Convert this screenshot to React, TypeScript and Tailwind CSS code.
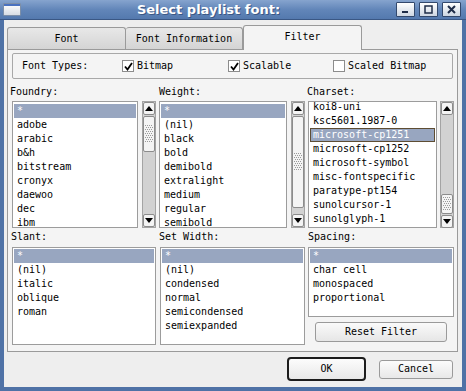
import React from "react";

const mono = "font-['DejaVu_Sans_Mono',monospace] text-[10px] leading-[14px] text-black";

const foundry = ["*", "adobe", "arabic", "b&h", "bitstream", "cronyx", "daewoo", "dec", "ibm"];
const weight = ["*", "(nil)", "black", "bold", "demibold", "extralight", "medium", "regular", "semibold"];
const charset = [
  "koi8-uni",
  "ksc5601.1987-0",
  "microsoft-cp1251",
  "microsoft-cp1252",
  "microsoft-symbol",
  "misc-fontspecific",
  "paratype-pt154",
  "sunolcursor-1",
  "sunolglyph-1",
];
const slant = ["*", "(nil)", "italic", "oblique", "roman"];
const setWidth = ["*", "(nil)", "condensed", "normal", "semicondensed", "semiexpanded"];
const spacing = ["*", "char cell", "monospaced", "proportional"];

function ListBox({
  items,
  selected,
  focus,
  inner,
  className,
}: {
  items: string[];
  selected: number;
  focus?: boolean;
  inner: string;
  className: string;
}) {
  return (
    <div className={"overflow-hidden border border-[#9c9c9c] bg-white " + className}>
      <div className={"flex flex-col px-[1px] " + inner}>
        {items.map((it, i) => (
          <div
            key={it}
            className={
              "h-[14px] shrink-0 whitespace-nowrap px-[3px] " +
              (i === selected
                ? "bg-[#98a6c0] text-white " + (focus ? "outline outline-1 -outline-offset-1 outline-[#5e4d33]" : "")
                : "")
            }
          >
            <span className={i === selected ? "text-white" : ""}>{it}</span>
          </div>
        ))}
      </div>
    </div>
  );
}

function Arrow({ up }: { up?: boolean }) {
  return (
    <div className="flex h-[13px] w-full shrink-0 items-center justify-center rounded-[2px] border border-[#8c8c8c] bg-[#f4f4f4]">
      <svg width="8" height="5" viewBox="0 0 8 5">
        {up ? <polygon points="0,5 8,5 4,0" fill="#000" /> : <polygon points="0,0 8,0 4,5" fill="#000" />}
      </svg>
    </div>
  );
}

function Grip({ h }: { h: number }) {
  const dots = [];
  for (let y = 0; y < h; y += 2) {
    for (let x = 0; x < 7; x += 2) {
      dots.push(<rect key={x + "-" + y} x={x + ((y / 2) % 2)} y={y} width="1" height="1" fill="#9a9a9a" />);
    }
  }
  return (
    <svg width="8" height={h} viewBox={"0 0 8 " + h}>
      {dots}
    </svg>
  );
}

function Scrollbar({ before, thumb }: { before: number; thumb: number }) {
  return (
    <div className="flex h-full w-[14px] shrink-0 flex-col border border-[#a4a4a4] bg-[#d2d2d2]">
      <Arrow up />
      <div className="flex flex-1 flex-col py-[1px]">
        <div style={{ height: before }} />
        <div
          className="flex shrink-0 items-center justify-center rounded-[2px] border border-[#8c8c8c] bg-[#f4f4f4]"
          style={{ height: thumb }}
        >
          <Grip h={Math.min(18, thumb - 6)} />
        </div>
      </div>
      <Arrow />
    </div>
  );
}

function Check({ on, label }: { on: boolean; label: string }) {
  return (
    <div className="flex items-center gap-[3px]">
      <div className="flex h-[12px] w-[12px] items-center justify-center border border-[#8c8c8c] bg-white">
        {on && (
          <svg width="9" height="9" viewBox="0 0 9 9">
            <path d="M1 4.5 L3.5 7.5 L8 1" stroke="#000" strokeWidth="1.8" fill="none" />
          </svg>
        )}
      </div>
      <span>{label}</span>
    </div>
  );
}

function TitleButton({ kind }: { kind: "min" | "max" | "close" }) {
  return (
    <div className="flex h-[15px] w-[19px] items-center justify-center rounded-[1px] border border-[#32486c] bg-gradient-to-b from-[#ffffff] to-[#cdd6e2]">
      <svg width="9" height="9" viewBox="0 0 9 9">
        {kind === "min" && <rect x="1" y="6" width="6" height="2" fill="#1e2c48" />}
        {kind === "max" && <rect x="1" y="1" width="7" height="7" stroke="#1e2c48" strokeWidth="1.5" fill="none" />}
        {kind === "close" && <path d="M1 1 L8 8 M8 1 L1 8" stroke="#1e2c48" strokeWidth="2" />}
      </svg>
    </div>
  );
}

export default function App() {
  return (
    <div className="flex h-[391px] w-[466px] flex-col bg-[#4f72a6]">
      {/* title bar */}
      <div className="flex h-[20px] shrink-0 items-center border-b border-[#3a5784] bg-gradient-to-b from-[#86a4ce] via-[#6286b9] to-[#5479ae] pl-[3px] pr-[5px]">
        <div className="flex h-[13px] w-[18px] flex-col overflow-hidden rounded-[1px] border border-[#7d8fa8] bg-gradient-to-b from-[#ffffff] to-[#d8dde4]">
          <div className="h-[2px] bg-[#4a72c0]" />
        </div>
        <div className="flex-1 text-center font-['DejaVu_Sans',sans-serif] text-[13px] font-bold text-white [text-shadow:1px_1px_0_#3b5785]">
          Select playlist font:
        </div>
        <div className="flex gap-[4px]">
          <TitleButton kind="min" />
          <TitleButton kind="max" />
          <TitleButton kind="close" />
        </div>
      </div>

      {/* body */}
      <div className={"mx-[4px] mb-[4px] flex flex-1 flex-col bg-[#eeeeee] pl-[3px] pr-[4px] pt-[5px] " + mono}>
        {/* tabs */}
        <div className="flex h-[24px] items-end">
          <div className="flex h-[22px] w-[119px] items-center justify-center rounded-t-[3px] border border-b-0 border-[#9a9a9a] bg-gradient-to-b from-[#e8e8e8] to-[#d4d4d4]">
            Font
          </div>
          <div className="flex h-[22px] w-[117px] items-center justify-center rounded-t-[3px] border border-b-0 border-l-0 border-[#9a9a9a] bg-gradient-to-b from-[#e8e8e8] to-[#d4d4d4]">
            Font Information
          </div>
          <div className="relative z-10 -mb-[1px] flex h-[25px] w-[119px] items-center justify-center rounded-t-[3px] border border-b-0 border-[#9a9a9a] bg-[#f4f4f4] pb-[2px]">
            Filter
          </div>
        </div>

        {/* panel */}
        <div className="flex h-[303px] flex-col border border-[#9a9a9a] bg-[#f4f4f4] px-[4px] pt-[3px]">
          <div className="flex h-[26px] shrink-0 items-center rounded-[2px] border border-[#a8a8a8] pl-[9px]">
            <span className="w-[100px]">Font Types:</span>
            <div className="w-[106px]">
              <Check on label="Bitmap" />
            </div>
            <div className="w-[105px]">
              <Check on label="Scalable" />
            </div>
            <Check on={false} label="Scaled Bitmap" />
          </div>

          <div className="grid grid-cols-[144px_146px_146px] gap-x-[3px]">
            <div className="-ml-[2px] pt-[6px] h-[22px]">Foundry:</div>
            <div className="pt-[6px] h-[22px]">Weight:</div>
            <div className="-ml-[1px] pt-[6px] h-[22px]">Charset:</div>

            <div className="flex h-[127px] gap-[4px]">
              <ListBox items={foundry} selected={0} inner="pt-[2px]" className="flex-1" />
              <Scrollbar before={0} thumb={36} />
            </div>
            <div className="flex h-[127px] gap-[4px]">
              <ListBox items={weight} selected={0} inner="pt-[2px]" className="flex-1" />
              <Scrollbar before={0} thumb={92} />
            </div>
            <div className="flex h-[127px] gap-[3px]">
              <ListBox items={charset} selected={2} focus inner="-mt-[2px]" className="flex-1" />
              <Scrollbar before={78} thumb={20} />
            </div>

            <div className="-ml-[1px] h-[19px] pt-[2px]">Slant:</div>
            <div className="h-[19px] pt-[2px]">Set Width:</div>
            <div className="h-[19px] pt-[2px]">Spacing:</div>

            <ListBox items={slant} selected={0} inner="pt-[1px]" className="h-[98px]" />
            <ListBox items={setWidth} selected={0} inner="pt-[1px]" className="ml-[1px] h-[98px]" />
            <div className="flex flex-col">
              <ListBox items={spacing} selected={0} inner="pt-[1px]" className="h-[70px]" />
              <div className="mx-[7px] mt-[5px] flex h-[20px] items-center justify-center rounded-[3px] border border-[#9a9a9a] bg-gradient-to-b from-[#fafafa] to-[#e6e6e6]">
                Reset Filter
              </div>
            </div>
          </div>
        </div>

        {/* buttons */}
        <div className="mt-[5px] flex h-[24px] items-center justify-end gap-[13px] pr-[5px]">
          <div className="flex h-[24px] w-[79px] items-center justify-center rounded-[4px] border-2 border-[#1c1c1c] bg-gradient-to-b from-[#fcfcfc] to-[#e8e8e8]">
            OK
          </div>
          <div className="flex h-[19px] w-[74px] items-center justify-center rounded-[3px] border border-[#9a9a9a] bg-gradient-to-b from-[#fcfcfc] to-[#e8e8e8]">
            Cancel
          </div>
        </div>
      </div>
    </div>
  );
}
